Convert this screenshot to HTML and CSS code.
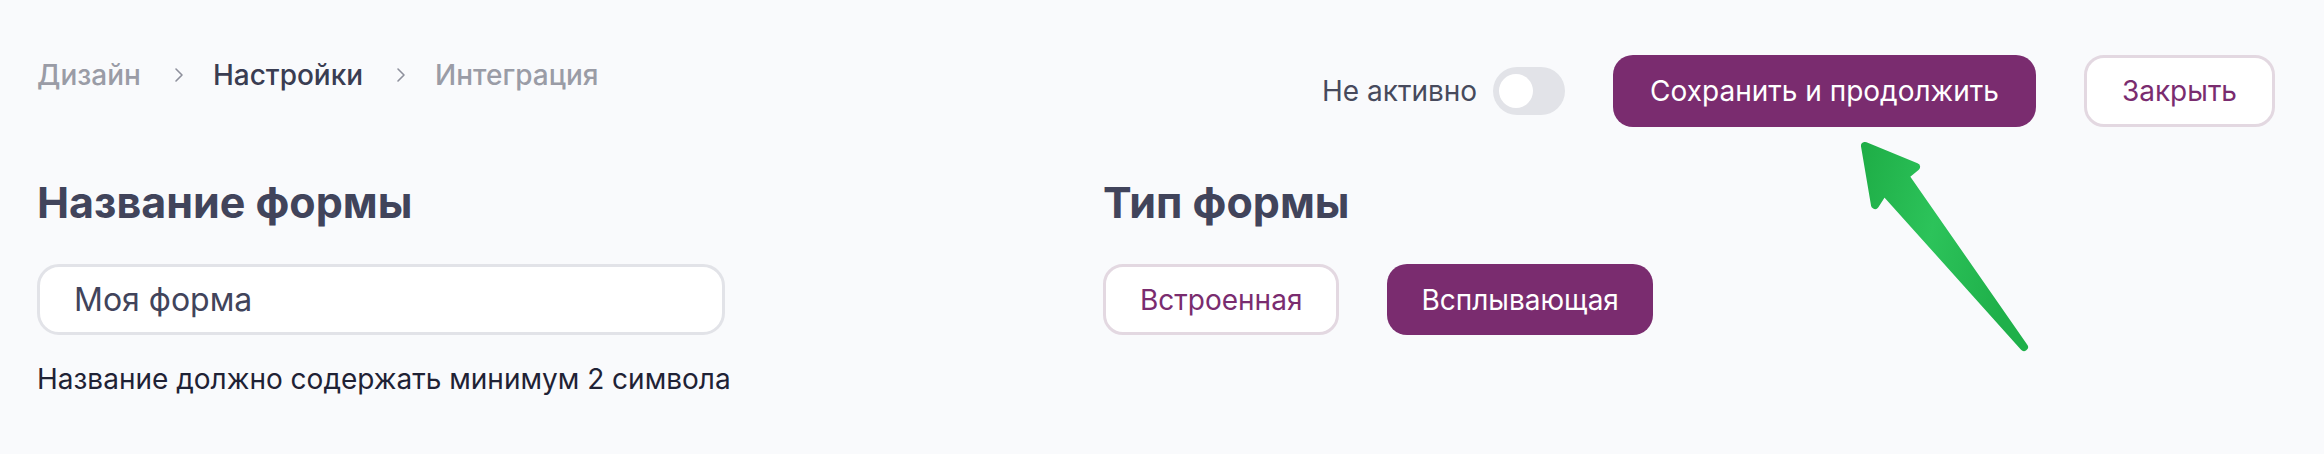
FILE: index.html
```html
<!DOCTYPE html>
<html lang="ru">
<head>
  <meta charset="UTF-8" />
  <meta name="viewport" content="width=device-width, initial-scale=1.0" />
  <title>Настройки формы</title>
  <link rel="stylesheet" href="styles.css">
</head>
<body>
  <div class="page">
    <div class="topbar">
      <nav class="crumbs">
        <span class="crumb">Дизайн</span>
        <svg class="chevron" width="12" height="16" viewBox="0 0 12 16"><path d="M3 2 L9 8 L3 14" fill="none" stroke="#8e909c" stroke-width="1.6" stroke-linecap="round" stroke-linejoin="round"/></svg>
        <span class="crumb current">Настройки</span>
        <svg class="chevron" width="12" height="16" viewBox="0 0 12 16"><path d="M3 2 L9 8 L3 14" fill="none" stroke="#8e909c" stroke-width="1.6" stroke-linecap="round" stroke-linejoin="round"/></svg>
        <span class="crumb">Интеграция</span>
      </nav>
      <div class="actions">
        <label class="status">
          <span>Не активно</span>
          <span class="switch"><span class="knob"></span></span>
        </label>
        <button class="btn btn-primary">Сохранить и продолжить</button>
        <button class="btn btn-outline btn-close">Закрыть</button>
      </div>
    </div>

    <div class="content">
      <section class="field">
        <h2>Название формы</h2>
        <input type="text" class="name-input" value="Моя форма" />
        <p class="hint">Название должно содержать минимум 2 символа</p>
      </section>
      <section class="field">
        <h2>Тип формы</h2>
        <div class="types">
          <button class="btn btn-outline">Встроенная</button>
          <button class="btn btn-primary">Всплывающая</button>
        </div>
      </section>
    </div>

    <!-- pointer drawn over the page -->
    <svg class="pointer" width="190" height="225" viewBox="0 0 190 225">
      <defs>
        <linearGradient id="arrowFill" x1="0" y1="0" x2="1" y2="0.3">
          <stop offset="0" stop-color="#1fae47"/>
          <stop offset="0.5" stop-color="#2cc35a"/>
          <stop offset="1" stop-color="#1fb04a"/>
        </linearGradient>
      </defs>
      <path d="M15 11 L66 32 L55 41 L174 212 L34 56 L25 70 Z" fill="url(#arrowFill)" stroke="url(#arrowFill)" stroke-width="8" stroke-linejoin="round" stroke-linecap="round"/>
    </svg>
  </div>
</body>
</html>
```

FILE: styles.css
```css
body {
  margin: 0;
  background: #f9fafc;
  font-family: Inter, "Noto Sans", sans-serif;
  color: #41445b;
}
.page {
  position: relative;
  padding: 55px 49px 0 37px;
}
.topbar {
  display: flex;
  justify-content: space-between;
  align-items: flex-start;
}
.crumbs {
  display: flex;
  align-items: center;
  height: 40px;
  font-size: 28px;
  font-weight: 500;
}
.crumb {
  color: #9a9ca6;
}
.crumb.current {
  color: #3a3d52;
}
.chevron {
  margin: 0 28px 0 32px;
}
.actions {
  display: flex;
  align-items: center;
  gap: 48px;
}
.status {
  display: flex;
  align-items: center;
  gap: 16px;
  font-size: 28px;
  color: #474a5c;
}
.switch {
  width: 72px;
  height: 48px;
  border-radius: 24px;
  background: #e2e3e8;
  display: flex;
  align-items: center;
  padding: 0 6px;
  box-sizing: border-box;
}
.knob {
  width: 34px;
  height: 34px;
  border-radius: 50%;
  background: #fff;
}
.btn {
  font-family: inherit;
  font-size: 28px;
  height: 72px;
  padding: 0 37px;
  border-radius: 20px;
  cursor: pointer;
  box-sizing: border-box;
}
.btn-primary {
  background: #7a2c6f;
  border: none;
  color: #fff;
}
.btn-outline {
  background: #fff;
  border: 3px solid #e3d8e1;
  color: #7a2c6f;
}
.btn-close {
  padding: 0 35px;
}
.content {
  display: grid;
  grid-template-columns: 1066px 1fr;
  margin-top: 47px;
}
.field h2 {
  margin: 0 0 34px;
  font-size: 43px;
  font-weight: 700;
  line-height: 56px;
  color: #41445b;
}
.name-input {
  display: block;
  width: 688px;
  height: 71px;
  box-sizing: border-box;
  padding: 0 34px;
  border: 3px solid #e2e3e8;
  border-radius: 22px;
  background: #fff;
  font-family: inherit;
  font-size: 32px;
  color: #41445b;
  outline: none;
}
.hint {
  margin: 24px 0 0;
  font-size: 28px;
  line-height: 40px;
  color: #1f2235;
}
.types {
  display: flex;
  gap: 48px;
}
.types .btn {
  height: 71px;
  padding: 0 34px;
}
.pointer {
  position: absolute;
  left: 1850px;
  top: 135px;
}
```
